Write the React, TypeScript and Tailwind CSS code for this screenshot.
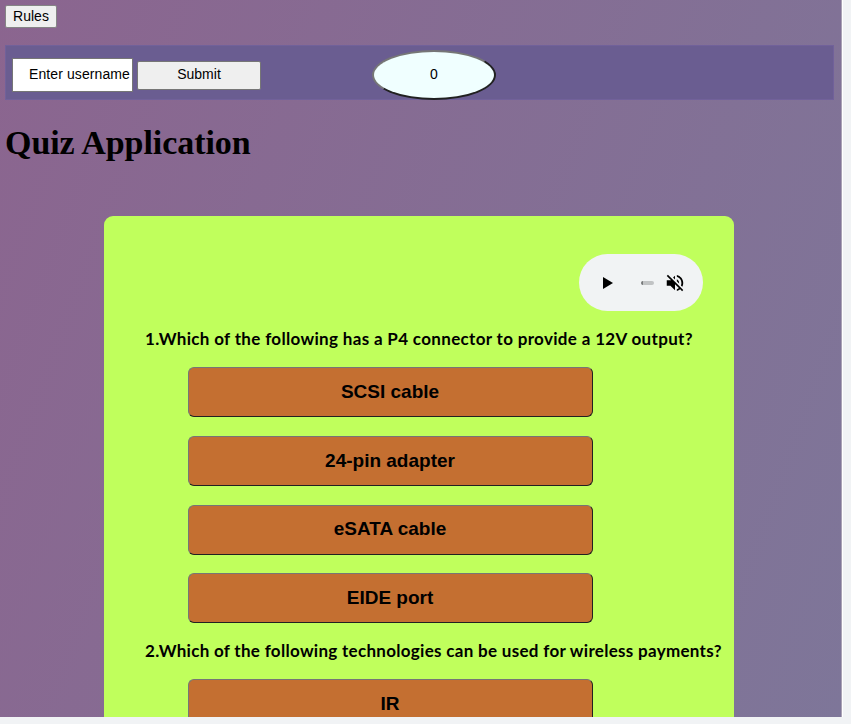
import React from "react";

const firstAnswers = ["SCSI cable", "24-pin adapter", "eSATA cable", "EIDE port"];

function Answer({ label }: { label: string }) {
  return (
    <button className="ml-[84px] block h-[50px] w-[405px] shrink-0 rounded-[6px] border border-t-[#767676] border-l-[#767676] border-r-[#212121] border-b-[#212121] bg-[#c46f31] pr-px font-['Liberation_Sans',sans-serif] text-[19px] font-bold text-black">
      {label}
    </button>
  );
}

function AudioPlayer() {
  return (
    <div className="ml-[475px] flex h-[57px] w-[124px] shrink-0 items-center rounded-[28.5px] bg-[#f1f3f4]">
      <svg className="ml-[24px] h-3 w-[10px]" viewBox="0 0 10 12">
        <path d="M0 0v12l10-6z" />
      </svg>
      <div className="ml-[28px] h-1 w-[13px] rounded-[2px] border-l-2 border-[#77797a] bg-[#c1c3c4]" />
      <svg className="ml-[10px] h-[22px] w-[22px]" viewBox="0 0 24 24">
        <path d="M16.5 12c0-1.77-1.02-3.29-2.5-4.03v2.21l2.45 2.45c.03-.2.05-.41.05-.63zm2.5 0c0 .94-.2 1.82-.54 2.64l1.51 1.51C20.63 14.91 21 13.5 21 12c0-4.28-2.99-7.86-7-8.77v2.06c2.89.86 5 3.54 5 6.71zM4.27 3L3 4.27 7.73 9H3v6h4l5 5v-6.73l4.25 4.25c-.67.52-1.42.93-2.25 1.18v2.06c1.38-.31 2.63-.95 3.69-1.81L19.73 21 21 19.73l-9-9L4.27 3zM12 4L9.91 6.09 12 8.18V4z" />
      </svg>
    </div>
  );
}

export default function App() {
  return (
    <div className="h-[724px] w-[851px] overflow-hidden bg-[#f1f3f5] font-['Liberation_Sans',sans-serif] text-black">
      <div className="h-[717px] w-[843px] overflow-hidden border-r border-white">
        <main className="flex h-[717px] w-[842px] flex-col overflow-hidden border-r border-[#aaa3b5] bg-[linear-gradient(110deg,#8b658f_0%,#7e7699_100%)] pt-[5px] pl-[4px]">
          <button className="ml-px h-[23px] w-[52px] shrink-0 rounded-[2px] border border-[#858585] bg-[#efefef] pb-px text-[14px] leading-5">
            Rules
          </button>
          <header className="mt-[17px] ml-px flex h-[55px] w-[829px] shrink-0 items-center border border-[#71619a] bg-[#6a5d91] pl-[6px]">
            <input
              className="mt-[4px] h-[34px] w-[121px] border border-[#767676] bg-white pr-0 pb-[2px] pl-[16px] text-[14px] tracking-[0.1px] placeholder:text-black placeholder:opacity-100"
              placeholder="Enter username"
            />
            <button className="mt-[5px] ml-[4px] h-[29px] w-[124px] rounded-[2px] border border-[#767676] bg-[#efefef] pb-px text-[14px]">
              Submit
            </button>
            <button className="mt-[4px] ml-[111px] h-[50px] w-[124px] rounded-[50%] border-2 border-t-[#767676] border-l-[#767676] border-r-[#212121] border-b-[#212121] bg-[#f0ffff] text-[14px]">
              0
            </button>
          </header>
          <h1 className="mt-[23px] ml-px h-[40px] shrink-0 font-['Liberation_Serif',serif] text-[34px] leading-[40px] font-bold tracking-[-0.06px]">
            Quiz Application
          </h1>
          <section className="mt-[53px] ml-[100px] flex h-[700px] w-[630px] shrink-0 flex-col rounded-t-[9px] bg-[#c0ff5c] pt-[38px]">
            <AudioPlayer />
            <h2 className="mt-[16px] ml-[41px] h-[24px] shrink-0 font-['Lato',sans-serif] text-[17px] leading-[24px] font-bold tracking-[0.33px] whitespace-nowrap">
              1.Which of the following has a P4 connector to provide a 12V output?
            </h2>
            <div className="mt-[16.4px] flex flex-col gap-[18.6px]">
              {firstAnswers.map((label) => (
                <Answer key={label} label={label} />
              ))}
            </div>
            <h2 className="mt-[16.2px] ml-[41px] h-[24px] shrink-0 font-['Lato',sans-serif] text-[17px] leading-[24px] font-bold tracking-[0.3px] whitespace-nowrap">
              2.Which of the following technologies can be used for wireless payments?
            </h2>
            <div className="mt-[16px]">
              <Answer label="IR" />
            </div>
          </section>
        </main>
      </div>
    </div>
  );
}
